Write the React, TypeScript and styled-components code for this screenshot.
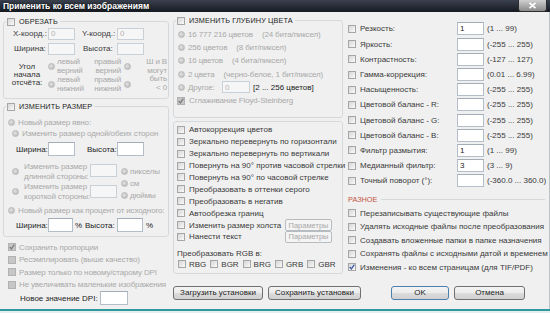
import styled, { createGlobalStyle } from "styled-components";

const GlobalStyle = createGlobalStyle`
  html, body { margin: 0; padding: 0; background: #f0f0f0; }
  body {
    font-family: "Liberation Sans", Arial, sans-serif;
    font-size: 8px;
    color: #3a3a3a;
  }
`;

const Window = styled.div`
  width: 550px;
  height: 313px;
  overflow: hidden;
  display: flex;
  flex-direction: column;
  background: #f0f0f0;
`;

const TitleBar = styled.div`
  flex: none;
  height: 12px;
  display: flex;
  align-items: center;
  justify-content: space-between;
  padding-left: 3px;
  background: linear-gradient(#3a414e, #161a21);
  color: #fff;
  font-size: 8.5px;
  font-weight: bold;
  text-shadow: 0 0 2px #000;
`;

const CloseButton = styled.div`
  width: 29px;
  height: 12px;
  margin-right: 3px;
  box-sizing: border-box;
  border: 1px solid #2e2e2e;
  border-top: none;
  border-radius: 0 0 3px 3px;
  background: linear-gradient(#cfcfcf, #8a8a8a);
  display: flex;
  align-items: center;
  justify-content: center;
`;

const Body = styled.div`
  flex: none;
  height: 297px;
  display: flex;
  border-right: 1px solid #b9c2c6;
`;

const BottomEdge = styled.div`
  flex: 1;
  border-top: 2px solid #2f9a9b;
  background: #e6eef0;
`;

const LeftCol = styled.div`
  flex: none;
  width: 169px;
  padding-left: 3px;
  box-sizing: border-box;
  display: flex;
  flex-direction: column;
`;

const Main = styled.div`
  flex: 1;
  display: flex;
  flex-direction: column;
`;

const Columns = styled.div`
  flex: none;
  height: 271px;
  display: flex;
`;

const MidCol = styled.div`
  flex: none;
  width: 176px;
  padding-left: 4px;
  box-sizing: border-box;
  display: flex;
  flex-direction: column;
`;

const RightCol = styled.div`
  flex: 1;
  padding: 9.4px 0 0 3px;
  display: flex;
  flex-direction: column;
`;

const Group = styled.div<{ $mt: number; $pb: number; $pt?: number; $w: number }>`
  width: ${(p) => p.$w}px;
  box-sizing: border-box;
  margin-top: ${(p) => p.$mt}px;
  padding-top: ${(p) => p.$pt ?? 0}px;
  padding-bottom: ${(p) => p.$pb}px;
  border: 1px solid #d6d9dc;
  border-radius: 3px;
  display: flex;
  flex-direction: column;
`;

const GroupHeader = styled.div`
  width: fit-content;
  height: 11px;
  margin: -6px 0 0 2px;
  padding: 0 2px 0 1px;
  display: flex;
  align-items: center;
  gap: 4px;
  background: #f0f0f0;
  font-size: 7.3px;
  color: #1d1d1d;
  letter-spacing: 0.1px;
`;

const Row = styled.div<{ $h: number; $pl?: number; $mt?: number; $gap?: number }>`
  flex: none;
  height: ${(p) => p.$h}px;
  margin-top: ${(p) => p.$mt ?? 0}px;
  padding-left: ${(p) => p.$pl ?? 0}px;
  display: flex;
  align-items: center;
  gap: ${(p) => p.$gap ?? 0}px;
  white-space: nowrap;
`;

const Text = styled.span<{ $muted?: boolean; $ml?: number; $w?: number; $dark?: boolean }>`
  flex: none;
  margin-left: ${(p) => p.$ml ?? 0}px;
  ${(p) => (p.$w ? `width: ${p.$w}px;` : "")}
  color: ${(p) => (p.$muted ? "#a9a9a9" : p.$dark ? "#222" : "#3a3a3a")};
  ${(p) => (p.$muted ? "letter-spacing: -0.15px;" : "")}
  white-space: nowrap;
`;

const TextBox = styled.input<{ $w: number; $h: number; $ml?: number }>`
  flex: none;
  width: ${(p) => p.$w}px;
  height: ${(p) => p.$h}px;
  margin: 0 0 0 ${(p) => p.$ml ?? 0}px;
  padding: 0 2px;
  box-sizing: border-box;
  border: 1px solid #b4bec8;
  border-top-color: #a3adb8;
  background: #fff;
  font: 8px "Liberation Sans", Arial, sans-serif;
  color: #222;
  outline: none;

  &:disabled {
    background: #f6f6f6;
    border-color: #c9d0d6;
    color: #b4b4b4;
  }
`;

const Box = styled.span<{ $disabled?: boolean }>`
  flex: none;
  width: 8px;
  height: 8px;
  box-sizing: border-box;
  border: 1px solid ${(p) => (p.$disabled ? "#b2b2b2" : "#a6a6a6")};
  background: ${(p) =>
    p.$disabled ? "#c6c6c6" : "linear-gradient(135deg, #d6d6d6, #fafafa)"};
  display: flex;
  align-items: center;
  justify-content: center;
`;

const RadioDot = styled.span<{ $ml?: number }>`
  flex: none;
  width: 7px;
  height: 7px;
  margin-left: ${(p) => p.$ml ?? 0}px;
  border-radius: 50%;
  box-sizing: border-box;
  border: 1px solid #bababa;
  background: radial-gradient(circle at 40% 40%, #e2e2e2, #b4b4b4);
`;

const Button = styled.div<{ $w: number; $ml?: number; $default?: boolean }>`
  flex: none;
  width: ${(p) => p.$w}px;
  height: 14px;
  margin-left: ${(p) => p.$ml ?? 0}px;
  box-sizing: border-box;
  border: 1px solid ${(p) => (p.$default ? "#4a7fae" : "#707070")};
  border-radius: 3px;
  background: linear-gradient(#f4f4f4 0%, #ebebeb 48%, #dcdcdc 52%, #d0d0d0 100%);
  display: flex;
  align-items: center;
  justify-content: center;
  color: #1e1e1e;
  font-size: 8px;
`;

const SmallButton = styled.div`
  flex: none;
  width: 47px;
  height: 12px;
  box-sizing: border-box;
  border: 1px solid #b7bcc0;
  border-radius: 2px;
  background: #f4f4f4;
  display: flex;
  align-items: center;
  justify-content: center;
  color: #a9a9a9;
  font-size: 7.5px;
`;

const AngleBlock = styled.div`
  flex: none;
  height: 36px;
  margin-top: 2px;
  display: flex;
`;

const AngleLabel = styled.div`
  width: 42px;
  padding-left: 4px;
  box-sizing: border-box;
  display: flex;
  align-items: center;
  justify-content: center;
  text-align: center;
  line-height: 8px;
  color: #333;
`;

const OptionCol = styled.div<{ $w: number; $right?: boolean; $pr?: number }>`
  width: ${(p) => p.$w}px;
  padding-right: ${(p) => p.$pr ?? 0}px;
  box-sizing: border-box;
  display: flex;
  flex-direction: column;
  align-items: ${(p) => (p.$right ? "flex-end" : "flex-start")};
`;

const Option = styled.div<{ $h: number }>`
  height: ${(p) => p.$h}px;
  display: flex;
  align-items: center;
  gap: 2px;
`;

const TwoLine = styled.span<{ $right?: boolean; $lh?: number; $ml?: number }>`
  margin-left: ${(p) => p.$ml ?? 0}px;
  line-height: ${(p) => p.$lh ?? 9}px;
  color: #a9a9a9;
  letter-spacing: -0.15px;
  text-align: ${(p) => (p.$right ? "right" : "left")};
  white-space: nowrap;
`;

const NoteCol = styled.div`
  width: 30px;
  padding-right: 1px;
  box-sizing: border-box;
  display: flex;
  align-items: center;
  justify-content: flex-end;
`;

const SideBlock = styled.div`
  flex: none;
  height: 37px;
  margin-top: 7px;
  padding-left: 8px;
  display: flex;
`;

const SideLabels = styled.div`
  width: 78px;
  display: flex;
  flex-direction: column;
  gap: 3px;
`;

const SideInputs = styled.div`
  width: 27px;
  padding-top: 1px;
  display: flex;
  flex-direction: column;
  gap: 8px;
`;

const Units = styled.div`
  margin-left: 4px;
  padding-top: 2px;
  display: flex;
  flex-direction: column;
`;

const SectionTitle = styled.div`
  flex: none;
  height: 10px;
  margin-top: 6.4px;
  display: flex;
  align-items: center;
  gap: 4px;
  padding-right: 4px;
  color: #c4533f;
  font-size: 7.3px;

  &::after {
    content: "";
    flex: 1;
    border-top: 1px solid #d6d9dc;
  }
`;

const Footer = styled.div`
  flex: none;
  margin-top: 2.5px;
  padding-left: 4px;
  display: flex;
  gap: 5px;
`;

function Check({ checked, disabled }: { checked?: boolean; disabled?: boolean }) {
  return (
    <Box $disabled={disabled}>
      {checked && (
        <svg width="6" height="6" viewBox="0 0 6 6">
          <path
            d="M0.7 3 L2.4 4.9 L5.3 0.7"
            fill="none"
            stroke={disabled ? "#7e7e7e" : "#3f5da3"}
            strokeWidth="1.3"
          />
        </svg>
      )}
    </Box>
  );
}

const depthOptions: [string, string][] = [
  ["16 777 216 цветов", "(24 бита/пиксел)"],
  ["256 цветов", "(8 бит/пиксел)"],
  ["16 цветов", "(4 бита/пиксел)"],
  ["2 цвета", "(черно-белое, 1 бит/пиксел)"],
];

const transforms = [
  "Автокоррекция цветов",
  "Зеркально перевернуть по горизонтали",
  "Зеркально перевернуть по вертикали",
  "Повернуть на 90° против часовой стрелки",
  "Повернуть на 90° по часовой стрелке",
  "Преобразовать в оттенки серого",
  "Преобразовать в негатив",
  "Автообрезка границ",
];

const adjustments: [string, string, string][] = [
  ["Резкость:", "1", "(1 ... 99)"],
  ["Яркость:", "", "(-255 ... 255)"],
  ["Контрастность:", "", "(-127 ... 127)"],
  ["Гамма-коррекция:", "", "(0.01 ... 6.99)"],
  ["Насыщенность:", "", "(-255 ... 255)"],
  ["Цветовой баланс - R:", "", "(-255 ... 255)"],
  ["Цветовой баланс - G:", "", "(-255 ... 255)"],
  ["Цветовой баланс - B:", "", "(-255 ... 255)"],
  ["Фильтр размытия:", "1", "(1 ... 99)"],
  ["Медианный фильтр:", "3", "(3 ... 9)"],
  ["Точный поворот (°):", "", "(-360.0 ... 360.0)"],
];

const misc: [string, boolean][] = [
  ["Перезаписывать существующие файлы", false],
  ["Удалять исходные файлы после преобразования", false],
  ["Создавать вложенные папки в папке назначения", false],
  ["Сохранять файлы с исходными датой и временем", false],
  ["Изменения - ко всем страницам (для TIF/PDF)", true],
];

const resizeChecks: [string, boolean][] = [
  ["Сохранить пропорции", true],
  ["Ресэмплировать (выше качество)", false],
  ["Размер только по новому/старому DPI", false],
  ["Не увеличивать маленькие изображения", false],
];

export default function App() {
  return (
    <Window>
      <GlobalStyle />
      <TitleBar>
        Применить ко всем изображениям
        <CloseButton>
          <svg width="9" height="7" viewBox="0 0 9 7">
            <path d="M1.5 0.8 L7.5 6.2 M7.5 0.8 L1.5 6.2" stroke="#fff" strokeWidth="1.6" />
          </svg>
        </CloseButton>
      </TitleBar>

      <Body>
        <LeftCol>
          <Group $w={166} $mt={9} $pb={5}>
            <GroupHeader>
              <Check />
              ОБРЕЗАТЬ
            </GroupHeader>
            <Row $h={13} $pl={9}>
              <Text $w={35}>X-коорд.:</Text>
              <TextBox $w={27} $h={12} disabled defaultValue="0" />
              <Text $w={35} $ml={7}>Y-коорд.:</Text>
              <TextBox $w={27} $h={12} disabled defaultValue="0" />
            </Row>
            <Row $h={13} $pl={10} $mt={2}>
              <Text $w={34}>Ширина:</Text>
              <TextBox $w={27} $h={12} disabled />
              <Text $w={34} $ml={8}>Высота:</Text>
              <TextBox $w={27} $h={12} disabled />
            </Row>
            <AngleBlock>
              <AngleLabel>
                Угол
                <br />
                начала
                <br />
                отсчёта:
              </AngleLabel>
              <OptionCol $w={46}>
                <Option $h={18}>
                  <RadioDot $ml={2} />
                  <TwoLine>
                    левый
                    <br />
                    верний
                  </TwoLine>
                </Option>
                <Option $h={18}>
                  <RadioDot $ml={2} />
                  <TwoLine>
                    левый
                    <br />
                    нижний
                  </TwoLine>
                </Option>
              </OptionCol>
              <OptionCol $w={46} $right $pr={7}>
                <Option $h={18}>
                  <TwoLine $right>
                    правый
                    <br />
                    верний
                  </TwoLine>
                  <RadioDot $ml={1} />
                </Option>
                <Option $h={18}>
                  <TwoLine $right>
                    правый
                    <br />
                    нижний
                  </TwoLine>
                  <RadioDot $ml={1} />
                </Option>
              </OptionCol>
              <NoteCol>
                <TwoLine $right $lh={8.5}>
                  Ш и В
                  <br />
                  могут
                  <br />
                  быть
                  <br />
                  &lt; 0
                </TwoLine>
              </NoteCol>
            </AngleBlock>
          </Group>

          <Group $w={166} $mt={7} $pb={4}>
            <GroupHeader>
              <Check />
              ИЗМЕНИТЬ РАЗМЕР
            </GroupHeader>
            <Row $h={12} $pl={4} $mt={4} $gap={3}>
              <RadioDot />
              <Text $muted>Новый размер явно:</Text>
            </Row>
            <Row $h={11} $pl={8} $gap={3}>
              <RadioDot />
              <Text $muted>Изменить размер одной/обеих сторон</Text>
            </Row>
            <Row $h={14} $pl={12} $mt={3}>
              <Text $w={32} $dark>Ширина:</Text>
              <TextBox $w={27} $h={14} />
              <Text $w={30} $ml={12} $dark>Высота:</Text>
              <TextBox $w={27} $h={14} />
            </Row>
            <SideBlock>
              <SideLabels>
                <Option $h={17}>
                  <RadioDot />
                  <TwoLine $lh={10} $ml={3}>
                    Изменить размер
                    <br />
                    длинной стороны:
                  </TwoLine>
                </Option>
                <Option $h={17}>
                  <RadioDot />
                  <TwoLine $lh={10} $ml={3}>
                    Изменить размер
                    <br />
                    короткой стороны:
                  </TwoLine>
                </Option>
              </SideLabels>
              <SideInputs>
                <TextBox $w={27} $h={13} disabled />
                <TextBox $w={27} $h={13} disabled />
              </SideInputs>
              <Units>
                {["пикселы", "см", "дюймы"].map((u) => (
                  <Row key={u} $h={12} $gap={2}>
                    <RadioDot />
                    <Text $muted>{u}</Text>
                  </Row>
                ))}
              </Units>
            </SideBlock>
            <Row $h={12} $pl={4} $mt={4} $gap={3}>
              <RadioDot />
              <Text $muted>Новый размер как процент от исходного:</Text>
            </Row>
            <Row $h={14} $pl={12} $mt={2}>
              <Text $w={32} $dark>Ширина:</Text>
              <TextBox $w={25} $h={14} />
              <Text $w={10} $ml={2} $dark>%</Text>
              <Text $w={32} $dark>Высота:</Text>
              <TextBox $w={26} $h={14} />
              <Text $ml={3} $dark>%</Text>
            </Row>
          </Group>

          <Row $h={0} $mt={4} />
          {resizeChecks.map(([label, on]) => (
            <Row key={label} $h={12.5} $pl={5} $gap={3}>
              <Check checked={on} disabled />
              <Text $muted>{label}</Text>
            </Row>
          ))}
          <Row $h={14} $pl={17}>
            <Text $w={80} $dark>Новое значение DPI:</Text>
            <TextBox $w={28} $h={14} />
          </Row>
        </LeftCol>

        <Main>
          <Columns>
            <MidCol>
              <Group $w={170} $mt={8} $pb={10}>
                <GroupHeader>
                  <Check />
                  ИЗМЕНИТЬ ГЛУБИНУ ЦВЕТА
                </GroupHeader>
                <Row $h={0} $mt={1.5} />
                {depthOptions.map(([a, b]) => (
                  <Row key={a} $h={13.3} $pl={4} $gap={3}>
                    <RadioDot />
                    <Text $muted>{a}</Text>
                    <Text $muted $ml={6}>
                      {b}
                    </Text>
                  </Row>
                ))}
                <Row $h={13.3} $pl={4} $gap={3}>
                  <RadioDot />
                  <Text $muted $w={31}>
                    Другое:
                  </Text>
                  <TextBox $w={28} $h={12} disabled defaultValue="0" />
                  <Text $dark>[2 ... 256 цветов]</Text>
                </Row>
                <Row $h={13.3} $pl={3} $gap={4}>
                  <Check checked disabled />
                  <Text $muted>Сглаживание Floyd-Steinberg</Text>
                </Row>
              </Group>

              <Group $w={170} $mt={3} $pt={1.7} $pb={4}>
                {transforms.map((t) => (
                  <Row key={t} $h={11.9} $pl={3} $gap={4}>
                    <Check />
                    <Text>{t}</Text>
                  </Row>
                ))}
                <Row $h={11.9} $pl={3} $gap={4}>
                  <Check />
                  <Text $w={92}>Изменить размер холста</Text>
                  <SmallButton>Параметры</SmallButton>
                </Row>
                <Row $h={11.9} $pl={3} $gap={4}>
                  <Check />
                  <Text $w={92}>Нанести текст</Text>
                  <SmallButton>Параметры</SmallButton>
                </Row>
                <Row $h={10.5} $pl={3} $mt={5.5}>
                  <Text>Преобразовать RGB в:</Text>
                </Row>
                <Row $h={10.5} $pl={4}>
                  {["RBG", "BGR", "BRG", "GRB", "GBR"].map((c) => (
                    <Row key={c} $h={10.5} $gap={3} style={{ width: 32.3 }}>
                      <Check />
                      <Text>{c}</Text>
                    </Row>
                  ))}
                </Row>
              </Group>
            </MidCol>

            <RightCol>
              {adjustments.map(([label, value, range]) => (
                <Row key={label} $h={15.2} $gap={4}>
                  <Check />
                  <Text $w={93}>{label}</Text>
                  <TextBox $w={27} $h={13} defaultValue={value} />
                  <Text $ml={-1}>{range}</Text>
                </Row>
              ))}
              <SectionTitle>РАЗНОЕ</SectionTitle>
              <Row $h={1.5} />
              {misc.map(([label, on]) => (
                <Row key={label} $h={13.5} $gap={4}>
                  <Check checked={on} />
                  <Text>{label}</Text>
                </Row>
              ))}
            </RightCol>
          </Columns>

          <Footer>
            <Button $w={90}>Загрузить установки</Button>
            <Button $w={93}>Сохранить установки</Button>
            <Button $w={58} $ml={25} $default>
              OK
            </Button>
            <Button $w={71}>Отмена</Button>
          </Footer>
        </Main>
      </Body>
      <BottomEdge />
    </Window>
  );
}
